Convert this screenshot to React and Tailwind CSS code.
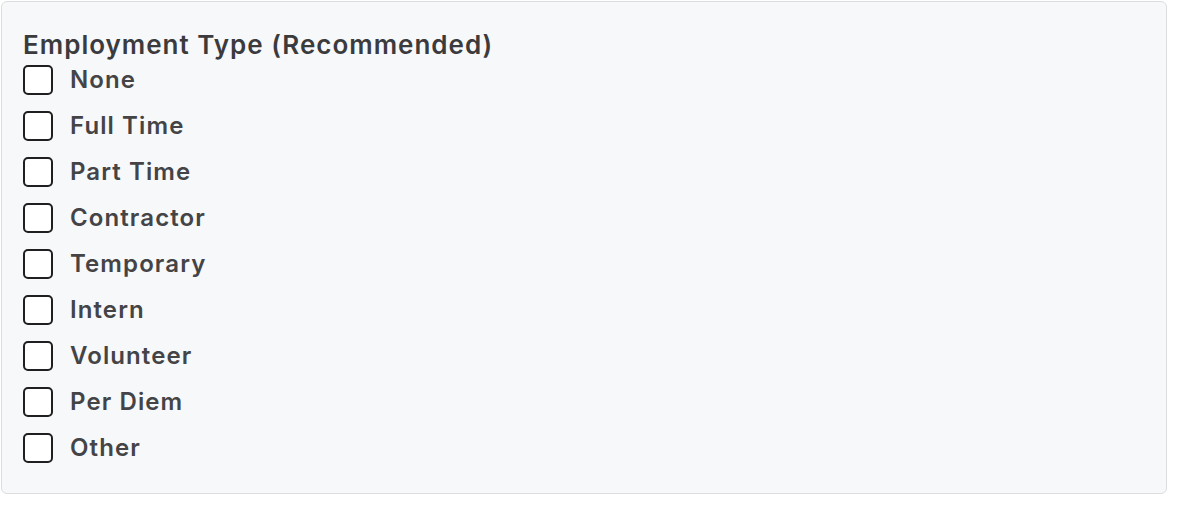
import React from "react";

const OPTIONS = [
  "None",
  "Full Time",
  "Part Time",
  "Contractor",
  "Temporary",
  "Intern",
  "Volunteer",
  "Per Diem",
  "Other",
];

const App = () => {
  return (
    <div className="w-[1184px] h-[512px] bg-white pl-px pt-px font-['Inter',sans-serif]">
      <div className="w-[1166px] h-[493px] bg-[#f7f8fa] border border-[#dcdde0] rounded-md pl-[21px] pt-[27px]">
        <h2 className="text-[26px] leading-[32px] font-semibold tracking-[1px] text-[#3b3b3e]">
          Employment Type (Recommended)
        </h2>
        <div className="flex flex-col gap-4 mt-[4px]">
          {OPTIONS.map((opt) => (
            <label key={opt} className="flex items-center gap-[17px] h-[30px]">
              <span className="w-[30px] h-[30px] bg-white border-2 border-[#1f1f22] rounded-[5px]" />
              <span className="text-[24px] font-semibold tracking-[1.1px] text-[#444447]">{opt}</span>
            </label>
          ))}
        </div>
      </div>
    </div>
  );
};

export default App;
